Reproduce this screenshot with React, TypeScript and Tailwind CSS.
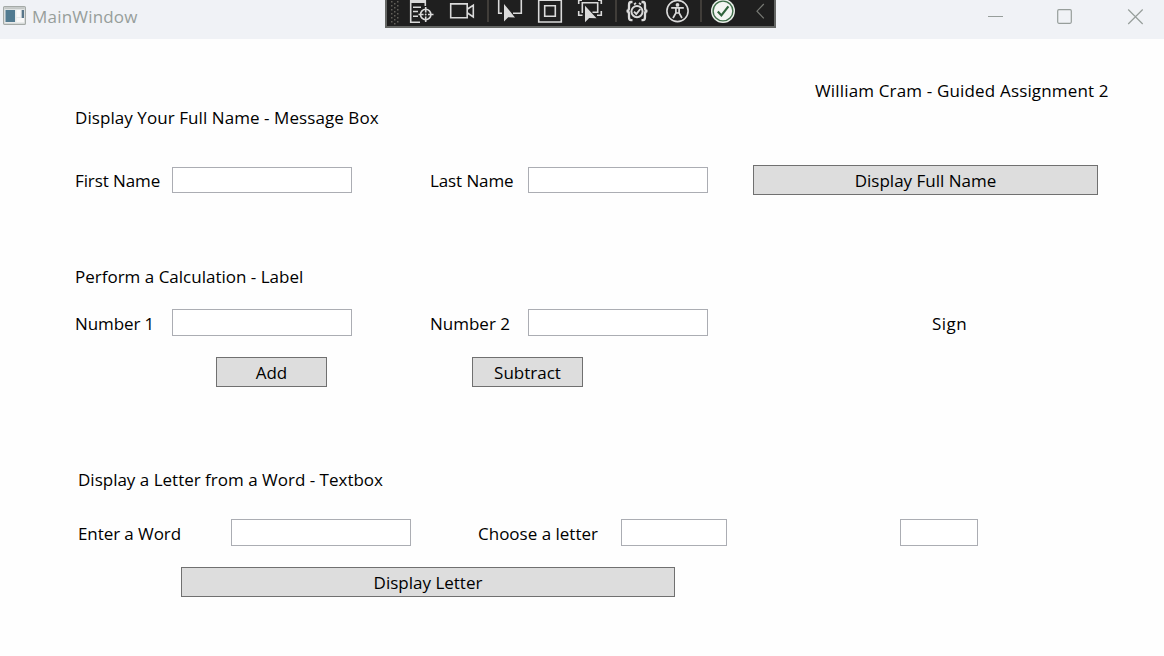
import type { ReactNode } from "react";

function Label({ className = "", children }: { className?: string; children: ReactNode }) {
  return <span className={`block shrink-0 whitespace-nowrap leading-[26px] ${className}`}>{children}</span>;
}

function TextBox({ className = "", label }: { className?: string; label: string }) {
  return (
    <input
      aria-label={label}
      className={`block shrink-0 rounded-none border border-[#abadb3] bg-white px-1 outline-none ${className}`}
    />
  );
}

function Button({ className = "", children }: { className?: string; children: ReactNode }) {
  return (
    <button
      className={`flex h-[30px] shrink-0 items-center justify-center whitespace-nowrap border border-[#707070] bg-[#dddddd] pt-[2px] leading-[26px] ${className}`}
    >
      {children}
    </button>
  );
}

function Tool({ x, w, children }: { x: number; w: number; children: ReactNode }) {
  return (
    <svg width={w} height={26} viewBox={`${x} 0 ${w} 26`} fill="none" stroke="#dadada" strokeWidth={1.6} className="block shrink-0">
      {children}
    </svg>
  );
}

const gripRows = [2, 6, 10, 14, 18, 22];

function DebugToolbar() {
  return (
    <div className="absolute left-[385px] top-0 flex h-[28px] w-[391px] border-x-2 border-b-2 border-[#656765] bg-[#1f1f1f]">
      <Tool x={387} w={20}>
        <g fill="#62605a" stroke="none">
          {gripRows.map((y) => (
            <g key={y}>
              <rect x={391} y={y - 1} width={1.5} height={1.5} />
              <rect x={397} y={y - 1} width={1.5} height={1.5} />
              <rect x={394} y={y + 1} width={1.5} height={1.5} />
            </g>
          ))}
        </g>
      </Tool>
      <Tool x={407} w={36}>
        <path d="M410 0H426V3H410Z" fill="#dadada" stroke="none" />
        <path d="M410.7 0V22.2H420M425.3 0V6M413 7.2H421M413 11.5H418M413 16.2H418" />
        <circle cx={425.7} cy={14.5} r={5.2} />
        <path d="M425.7 7V12.5M425.7 16.5V22M418.5 14.5H423.5M428 14.5H433.5" />
        <circle cx={425.7} cy={14.5} r={0.9} fill="#dadada" stroke="none" />
      </Tool>
      <Tool x={443} w={40}>
        <path d="M450.7 3.9H467.2V17.7H450.7Z" />
        <path d="M467.5 9L473.3 5.3V17L467.5 13" />
      </Tool>
      <Tool x={483} w={10}>
        <path d="M488 0V22" stroke="#4a4641" />
      </Tool>
      <Tool x={493} w={37}>
        <path d="M498.7 0V13.3H502M513 13.3H521.3V0" />
        <path d="M504 4V21.6L508.2 17.2L515 17.4Z" fill="#dadada" stroke="none" />
      </Tool>
      <Tool x={530} w={40}>
        <path d="M538.7 .3H561.3V22H538.7Z" />
        <path d="M544.7 5.7H555.3V16.3H544.7Z" />
      </Tool>
      <Tool x={570} w={40}>
        <path d="M578.7 4V.3H582M598 .3H601.3V4M578.7 11V15.3H582.5M601.3 11V15.3H597" />
        <path d="M583 12.3H582.3V2.7H597.7V12.3H592.5" />
        <path d="M585 5.8V22.3L589.2 18L596.5 18.3Z" fill="#dadada" stroke="none" />
      </Tool>
      <Tool x={610} w={10}>
        <path d="M616 0V22" stroke="#4a4641" />
      </Tool>
      <Tool x={620} w={38}>
        <path d="M632.5 2H631C629 2 629 3.5 629 5V8C629 10 628 11 626.5 11C628 11 629 12 629 14V17C629 19 629.5 20.2 631 20.2H632.5M641.5 2H643C645 2 645 3.5 645 5V8C645 10 646 11 647.5 11C646 11 645 12 645 14V17C645 19 644.5 20.2 643 20.2H641.5" strokeWidth={2.3} />
        <circle cx={637} cy={11.6} r={5.6} strokeWidth={2} />
        <path d="M634 11.6L636.3 14L640.3 9" strokeWidth={1.9} />
        <path d="M634 4.5L636 3M639 3L641 4.5" strokeWidth={1.8} />
      </Tool>
      <Tool x={658} w={37}>
        <circle cx={677.5} cy={11} r={10.6} />
        <circle cx={677.5} cy={4.9} r={1.9} fill="#dadada" stroke="none" />
        <path d="M671.2 7.8H683.8M675.9 8V13L673 18M679.1 8V13L682 18M675.9 13H679.1" strokeWidth={1.7} />
      </Tool>
      <Tool x={695} w={11}>
        <path d="M701 0V22" stroke="#4a4641" />
      </Tool>
      <Tool x={706} w={38}>
        <circle cx={723} cy={11} r={12} fill="#e9efe9" stroke="none" />
        <circle cx={723} cy={11} r={9.9} fill="#f3f5f2" stroke="#3f6e49" strokeWidth={1.4} />
        <path d="M717.8 11.4L721.4 15.4L728.4 6.3" stroke="#2f633b" strokeWidth={2.2} />
      </Tool>
      <Tool x={744} w={30}>
        <path d="M763.8 4L757 11.2L763.8 18.4" stroke="#777974" strokeWidth={1.2} />
      </Tool>
    </div>
  );
}

function TitleBar() {
  return (
    <header className="relative flex h-[39px] w-full shrink-0 bg-[#f0f2f6] text-[#979e9b]">
      <svg width={24} height={19} viewBox="0 0 24 19" className="ml-[3px] mt-[6px] block shrink-0">
        <rect x={0.6} y={0.6} width={21.8} height={17.8} rx={1} fill="#e9ebeb" stroke="#a5aaa7" strokeWidth={1.2} />
        <rect x={1.5} y={1.2} width={20} height={2} fill="#c4c8c6" />
        <rect x={2.5} y={4} width={9.5} height={12} fill="#527b91" />
        <rect x={13.5} y={4} width={4} height={7} fill="#fafafa" />
        <rect x={18.7} y={4} width={2.3} height={8} fill="#58768a" />
        <rect x={13.5} y={12} width={7.5} height={4} fill="#f8f8f8" />
      </svg>
      <span className="ml-[5px] mt-[4px] block w-[120px] whitespace-nowrap text-[17px] leading-[26px] tracking-[0.2px]">MainWindow</span>
      <svg width={176} height={39} viewBox="988 0 176 39" fill="none" stroke="#979e9b" strokeWidth={1.2} className="ml-auto block shrink-0">
        <path d="M988 16.5H1003" strokeWidth={1} />
        <rect x={1057.7} y={9.7} width={13.6} height={13.6} rx={1.2} />
        <path d="M1128.2 9.5L1142.7 24M1142.7 9.5L1128.2 24" />
      </svg>
      <DebugToolbar />
    </header>
  );
}

export default function App() {
  return (
    <div className="flex h-[656px] w-[1164px] flex-col overflow-hidden bg-[#fefefe] font-['Open_Sans','Noto_Sans',sans-serif] text-[17px] text-black">
      <TitleBar />
      <main className="flex flex-col">
        <div className="mt-[39px] flex h-[26px] pl-[815px]">
          <Label className="tracking-[0.16px]">William Cram - Guided Assignment 2</Label>
        </div>
        <section>
          <div className="mt-[1px] flex h-[26px] pl-[75px]">
            <Label className="tracking-[0.07px]">Display Your Full Name - Message Box</Label>
          </div>
          <div className="mt-[34px] flex h-[30px] items-center pl-[75px]">
            <Label className="w-[97px] pt-[2px] tracking-[-0.1px]">First Name</Label>
            <TextBox label="First Name" className="h-[26px] w-[180px]" />
            <Label className="ml-[78px] w-[98px] pt-[2px] tracking-[-0.1px]">Last Name</Label>
            <TextBox label="Last Name" className="h-[26px] w-[180px]" />
            <Button className="ml-[45px] w-[345px]">Display Full Name</Button>
          </div>
        </section>
        <section>
          <div className="mt-[69px] flex h-[26px] pl-[75px]">
            <Label>Perform a Calculation - Label</Label>
          </div>
          <div className="mt-[19px] flex h-[27px] items-center pl-[75px]">
            <Label className="w-[97px] pt-[2px] tracking-[-0.1px]">Number 1</Label>
            <TextBox label="Number 1" className="h-[27px] w-[180px]" />
            <Label className="ml-[78px] w-[98px] pt-[2px]">Number 2</Label>
            <TextBox label="Number 2" className="h-[27px] w-[180px]" />
            <Label className="ml-[224px] pt-[2px] tracking-[0.5px]">Sign</Label>
          </div>
          <div className="mt-[21px] flex gap-[145px] pl-[216px]">
            <Button className="w-[111px]">Add</Button>
            <Button className="w-[111px]">Subtract</Button>
          </div>
        </section>
        <section>
          <div className="mt-[80px] flex h-[26px] pl-[78px]">
            <Label>Display a Letter from a Word - Textbox</Label>
          </div>
          <div className="mt-[26px] flex h-[27px] items-center pl-[78px]">
            <Label className="w-[153px] pt-[2px] tracking-[-0.08px]">Enter a Word</Label>
            <TextBox label="Enter a Word" className="h-[27px] w-[180px]" />
            <Label className="ml-[67px] w-[143px] pt-[2px]">Choose a letter</Label>
            <TextBox label="Choose a letter" className="h-[27px] w-[106px]" />
            <TextBox label="Result" className="ml-[173px] h-[27px] w-[78px]" />
          </div>
          <div className="mt-[21px] flex pl-[181px]">
            <Button className="w-[494px]">Display Letter</Button>
          </div>
        </section>
      </main>
    </div>
  );
}
